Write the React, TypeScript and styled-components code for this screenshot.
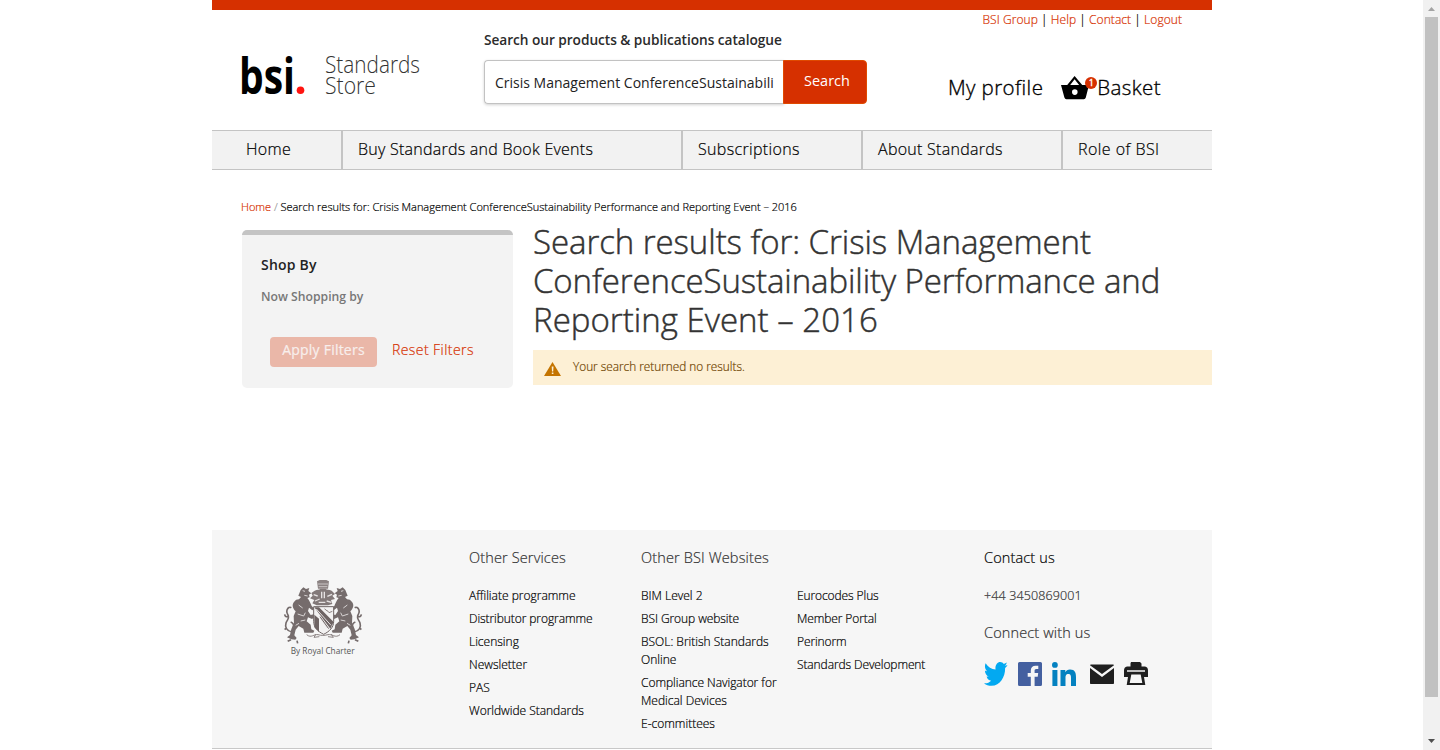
import React from "react";
import styled, { createGlobalStyle } from "styled-components";

const Global = createGlobalStyle`
  * { box-sizing: border-box; }
  html, body { margin: 0; padding: 0; background: #fff; }
  body { font-family: "Open Sans", "Noto Sans", sans-serif; font-weight: 300; -webkit-text-stroke-width: 0.2px; color: #000; overflow: hidden; }
  h1, h2, h3, p, ul { margin: 0; padding: 0; font-weight: inherit; }
  ul { list-style: none; }
  a { color: inherit; text-decoration: none; }
`;
const red = "#d63000";

const Viewport = styled.div`display: grid; grid-template-columns: 1423px 17px; height: 750px; overflow: hidden;`;
const Page = styled.div`width: 1000px; margin: 0 auto 0 212px; height: 750px; display: flex; flex-direction: column;`;
const Tracked = styled.span<{ $ls: number }>`letter-spacing: ${p => p.$ls}px;`;

const Header = styled.header`border-top: 10px solid ${red}; height: 130px; display: grid; grid-template-columns: 272px 383px 1fr; flex: none;`;
const Logo = styled.svg`display: block; width: 200px; height: 50px; margin: 40px 0 0 28px; overflow: visible;`;
const SearchForm = styled.form`padding-top: 20px; -webkit-text-stroke-width: 0;`;
const SearchLabel = styled.label`display: block; font-size: 13.7px; line-height: 19px; letter-spacing: -0.05px; font-weight: 600; color: #2b2b2b; white-space: nowrap;`;
const SearchRow = styled.div`display: flex; margin-top: 11px; height: 44px; width: 383px;`;
const SearchInput = styled.div`width: 300px; border: 1px solid #c2c2c2; border-right: 0; border-radius: 4px 0 0 4px; box-shadow: 0 1px 3px rgba(0,0,0,.18); padding: 0 10px; display: flex; align-items: center; font-size: 14px; font-weight: 400; color: #222; white-space: nowrap; overflow: hidden;`;
const SearchButton = styled.button`width: 84px; border: 1px solid #e04a00; border-radius: 0 4px 4px 0; background: ${red}; color: #fff; font: 500 14.5px/20px "Open Sans", sans-serif; padding: 0 0 2px 4px; margin-left: -1px; white-space: nowrap;`;
const HeaderRight = styled.div`display: flex; flex-direction: column; align-items: flex-end;`;
const TopLinks = styled.div`font-size: 12px; line-height: 18px; letter-spacing: 0.06px; margin: 1px 30px 0 0; white-space: nowrap; a { color: ${red}; }`;
const Account = styled.div`display: flex; align-items: center; margin: 42px 51px 0 0; height: 32px; font-size: 20.5px; letter-spacing: 0.4px; white-space: nowrap; -webkit-text-stroke-width: 0.35px;`;
const BasketIcon = styled.span`position: relative; width: 28px; height: 26px; margin: 1px 8px 0 18px; svg { display: block; }`;
const Badge = styled.span`position: absolute; left: 24px; top: 2px; width: 12px; height: 12px; border-radius: 50%; background: ${red}; color: #fff; font-size: 9px; font-weight: 400; letter-spacing: 0; line-height: 12px; text-align: center;`;

const Nav = styled.nav`display: flex; height: 40px; flex: none; background: #f2f2f2; border: solid #c4c4c4; border-width: 1px 0; font-size: 16px; line-height: 36px;`;
const NavItem = styled.a<{ $w: number; $first?: boolean }>`width: ${p => p.$w}px; padding-left: ${p => (p.$first ? 34 : 15)}px; border-left: ${p => (p.$first ? 0 : 2)}px solid #c4c4c4; white-space: nowrap;`;

const Crumbs = styled.div`margin: 29px 0 0 29px; height: 16px; flex: none; font-size: 11px; line-height: 16px; letter-spacing: -0.015px; white-space: nowrap; a { color: ${red}; } i { font-style: normal; color: #999; }`;
const Main = styled.main`display: grid; grid-template-columns: 271px 679px; gap: 20px; margin-left: 30px; height: 315px; padding-top: 7px; flex: none;`;
const Sidebar = styled.aside`margin-top: 8px; height: 158px; background: #f3f3f3; border-top: 5px solid #c4c4c4; border-radius: 5px; padding: 20px 19px 0; white-space: nowrap;`;
const ShopBy = styled.h2`font-size: 14px; line-height: 20px; letter-spacing: 0.2px; font-weight: 600; color: #222; -webkit-text-stroke-width: 0;`;
const NowShopping = styled.h3`font-size: 12.2px; line-height: 18px; margin-top: 13px; font-weight: 600; color: #777; -webkit-text-stroke-width: 0;`;
const FilterActions = styled.div`display: flex; margin: 31px 0 0 9px; font-size: 14px; line-height: 26px;`;
const Apply = styled.button`width: 107px; height: 30px; border: 0; border-radius: 4px; background: #eab7a8; color: #f8efed; padding: 0 0 4px; font: 500 14px/26px "Open Sans", sans-serif; letter-spacing: 0.22px; white-space: nowrap;`;
const Reset = styled.a`color: ${red}; margin-left: 15px; letter-spacing: 0.43px;`;
const Title = styled.h1`font-size: 33px; line-height: 39px; color: #333; white-space: nowrap; -webkit-text-stroke-width: 0.45px; span { display: block; }`;
const Notice = styled.div`height: 35px; margin-top: 11px; background: #fdf0d5; color: #6f4400; display: flex; align-items: center; font-size: 11.8px; padding-left: 11px; svg { margin: 2px 12px 0 0; } span { margin-bottom: 3px; }`;

const Footer = styled.footer`height: 219px; flex: none; background: #f6f6f6; border-bottom: 1px solid #c8c8c8; display: grid; grid-template-columns: 257px 172px 156px 187px 1fr; padding-top: 18px;`;
const Crest = styled.svg`display: block; width: 110px; height: 95px; margin: 22px 0 0 58px;`;
const FootTitle = styled.h3<{ $dark?: boolean }>`font-size: 14.5px; line-height: 20px; height: 20px; letter-spacing: 0.14px; margin-bottom: 19px; color: ${p => (p.$dark ? "#000" : "#333")}; white-space: nowrap;`;
const Links = styled.ul<{ $untitled?: boolean }>`font-size: 12px; line-height: 18px; white-space: nowrap; margin-top: ${p => (p.$untitled ? 39 : 0)}px; li { margin-bottom: 5px; letter-spacing: ${p => (p.$untitled ? -0.1 : 0)}px; } span { display: block; }`;
const Phone = styled.p`font-size: 12.5px; line-height: 18px; color: #333; letter-spacing: 0.13px; margin-bottom: 18px;`;
const Socials = styled.div`display: flex; gap: 10px; height: 24px; svg { display: block; } svg:nth-child(4) { margin-left: 4px; }`;

const Scrollbar = styled.div`background: #f1f1f1; display: flex; flex-direction: column; align-items: center; height: 750px;`;
const Arrow = styled.svg`width: 17px; height: 17px; flex: none;`;
const Thumb = styled.div`width: 13px; height: 680px; background: #c1c1c1; margin-bottom: 36px;`;

const Supporter = () => (
  <g>
    <path d="M92 60l8-8 8 5 10-3-3 9 9 7-7 4 2 8-7 2c6 7 9 15 13 24l8 8-6 5-10-8-3 10 8 12 12-3 4 6-12 9-12-5-4 12 12 10 2 14 9 4-3 6H103l-3-12-14-8-9 11-4 17 7 8-4 5-12-1-13-6 9-7 4-18 8-18-1-21 6-14c-9-9-12-20-5-28 4-6 9-8 15-8l6-7-8-4z" fill="#756c6c" />
    <path d="M66 186c-16-3-22-15-18-27 3-9 10-12 7-22-2-6-7-8-4-17 3-7 8-10 13-7M55 139c-6 3-10 1-11-6M62 156c8 3 11 9 8 18M50 173l-6 6M63 209l-10 5m28-2 2 8" fill="none" stroke="#756c6c" strokeWidth="5" />
    <path d="M98 62l7 2m-2 12 10 2m-27 27 12 9m-15 18 18 6 5-10m-14 25 14-3m-29 16 10-6" fill="none" stroke="#d8d4d4" strokeWidth="3" />
  </g>
);

export default function App() {
  return (
    <Viewport>
      <Global />
      <Page>
        <Header>
          <Logo viewBox="240 50 200 50">
            <text x="239" y="94" fontSize="50" fontWeight="700" textLength="56" lengthAdjust="spacingAndGlyphs">bsi</text>
            <circle cx="300.5" cy="90.3" r="3.8" fill="#ff1410" />
            <text x="325" y="73" fontSize="23.5" fill="#333" textLength="95" lengthAdjust="spacingAndGlyphs">Standards</text>
            <text x="325" y="94" fontSize="23.5" fill="#333" textLength="51" lengthAdjust="spacingAndGlyphs">Store</text>
          </Logo>
          <SearchForm>
            <SearchLabel>Search our products &amp; publications catalogue</SearchLabel>
            <SearchRow>
              <SearchInput>Crisis Management ConferenceSustainabili</SearchInput>
              <SearchButton type="button">Search</SearchButton>
            </SearchRow>
          </SearchForm>
          <HeaderRight>
            <TopLinks><a>BSI Group</a> | <a>Help</a> | <a>Contact</a> | <a>Logout</a></TopLinks>
            <Account>
              <span>My profile</span>
              <BasketIcon>
                <svg width="28" height="26" viewBox="0 0 28 26"><path fillRule="evenodd" d="M0 10h6.2L13.6 1l7.6 9H28l-3.200 12.500q-.5 1.800-2 1.800H5.400q-1.500 0-2-1.800zM9.200 10h8.900l-4.500-5.700zM13.800 14.300a2.800 2.800 0 1 0 0 5.600a2.800 2.800 0 1 0 0-5.600z" /></svg>
                <Badge>1</Badge>
              </BasketIcon>
              <span>Basket</span>
            </Account>
          </HeaderRight>
        </Header>
        <Nav>
          <NavItem $w={129} $first><Tracked $ls={0.3}>Home</Tracked></NavItem>
          <NavItem $w={340}><Tracked $ls={0.25}>Buy Standards and Book Events</Tracked></NavItem>
          <NavItem $w={180}><Tracked $ls={0.34}>Subscriptions</Tracked></NavItem>
          <NavItem $w={200}><Tracked $ls={0.27}>About Standards</Tracked></NavItem>
          <NavItem $w={151}><Tracked $ls={0.45}>Role of BSI</Tracked></NavItem>
        </Nav>
        <Crumbs><a>Home</a> <i>/</i> <span>Search results for: Crisis Management ConferenceSustainability Performance and Reporting Event – 2016</span></Crumbs>
        <Main>
          <Sidebar>
            <ShopBy>Shop By</ShopBy>
            <NowShopping>Now Shopping by</NowShopping>
            <FilterActions>
              <Apply>Apply Filters</Apply>
              <Reset>Reset Filters</Reset>
            </FilterActions>
          </Sidebar>
          <div>
            <Title>
              <Tracked $ls={-0.07}>Search results for: Crisis Management</Tracked>
              <Tracked $ls={-0.11}>ConferenceSustainability Performance and</Tracked>
              <Tracked $ls={0.02}>Reporting Event – 2016</Tracked>
            </Title>
            <Notice>
              <svg width="17" height="14" viewBox="0 0 17 14"><path d="M8.500 0L17 14H0z" fill="#c47400" /><path d="M7.700 4.500h1.800l-.3 5H8zM7.800 10.500h1.600V12H7.800z" fill="#fdf0d5" /></svg>
              <span>Your search returned no results.</span>
            </Notice>
          </div>
        </Main>
        <Footer>
          <Crest viewBox="0 0 330 285">
            <Supporter />
            <g transform="translate(318 0) scale(-1 1)"><Supporter /></g>
            <path d="M141 34l8-4h20l8 4-3 22h-30z" fill="#8b8282" />
            <path d="M144 42h30M146 50h26" stroke="#c9c4c4" strokeWidth="3" />
            <path d="M134 62c8-5 14-2 17-6h16c3 4 10 1 18 6l10 10-8 5 8 10-12 3 4 12-13 4H140l-13-6 6-10-13-5 8-8-4-8z" fill="#827979" />
            <path d="M131 74l12 4m-8 15 14-6m6-22v20m8-20v20m9-6 14-6m-16 20 14 4m-38 0h20" stroke="#e6e3e3" strokeWidth="4" />
            <path d="M131 110h60v44c0 18-12 30-30 39-18-9-30-21-30-39z" fill="#f3f2f2" stroke="#6e6464" strokeWidth="3" />
            <path d="M133 112h14l44 44-10 20zM133 134l14 12v40l-14-14z" fill="#6e6464" />
            <path d="M139 117l44 49M152 146l20 28" stroke="#e6e3e3" strokeWidth="3" />
            <path d="M150 140l26 36" stroke="#6e6464" strokeWidth="3" />
            <path d="M164 116c4 8 10 4 13 12l10-4M110 194c14 12 22-3 34 0 10 3 18 3 30 0 12-3 22 12 36 0M138 192l-6 10 16-2m36-8 6 10-16-2" fill="none" stroke="#8b8282" strokeWidth="3" />
            <text x="62" y="252" fontSize="25" fontWeight="400" fill="#555" textLength="192" lengthAdjust="spacingAndGlyphs">By Royal Charter</text>
          </Crest>
          <div>
            <FootTitle>Other Services</FootTitle>
            <Links>
              <li><a>Affiliate programme</a></li>
              <li><Tracked as="a" $ls={-0.08}>Distributor programme</Tracked></li>
              <li><a>Licensing</a></li>
              <li><a>Newsletter</a></li>
              <li><a>PAS</a></li>
              <li><Tracked as="a" $ls={-0.03}>Worldwide Standards</Tracked></li>
            </Links>
          </div>
          <div>
            <FootTitle>Other BSI Websites</FootTitle>
            <Links>
              <li><a>BIM Level 2</a></li>
              <li><Tracked as="a" $ls={-0.08}>BSI Group website</Tracked></li>
              <li><span>BSOL: British Standards</span><span>Online</span></li>
              <li><Tracked $ls={-0.04}>Compliance Navigator for</Tracked><span>Medical Devices</span></li>
              <li><a>E-committees</a></li>
            </Links>
          </div>
          <Links $untitled>
            <li><a>Eurocodes Plus</a></li>
            <li><a>Member Portal</a></li>
            <li><a>Perinorm</a></li>
            <li><a>Standards Development</a></li>
          </Links>
          <div>
            <FootTitle $dark>Contact us</FootTitle>
            <Phone>+44 3450869001</Phone>
            <FootTitle>Connect with us</FootTitle>
            <Socials>
              <svg width="24" height="24" viewBox="0 2.2 24.500 19.700" preserveAspectRatio="none"><path fill="#03a9f1" d="M23.954 4.569c-.885.389-1.83.654-2.825.775 1.014-.611 1.794-1.574 2.163-2.723-.951.555-2.005.959-3.127 1.184-.896-.959-2.173-1.559-3.591-1.559-2.717 0-4.92 2.203-4.92 4.917 0 .39.045.765.127 1.124C7.691 8.094 4.066 6.13 1.64 3.161c-.427.722-.666 1.561-.666 2.475 0 1.71.87 3.213 2.188 4.096-.807-.026-1.566-.248-2.228-.616v.061c0 2.385 1.693 4.374 3.946 4.827-.413.111-.849.171-1.296.171-.314 0-.615-.03-.916-.086.631 1.953 2.445 3.377 4.604 3.417-1.68 1.319-3.809 2.105-6.102 2.105-.39 0-.779-.023-1.17-.067 2.189 1.394 4.768 2.209 7.557 2.209 9.054 0 13.999-7.496 13.999-13.986 0-.209 0-.42-.015-.63.961-.689 1.8-1.56 2.46-2.548l-.047-.02z" /></svg>
              <svg width="24" height="24" viewBox="0 0 24 24"><path fill="#4460a0" d="M1.500 0h21A1.500 1.500 0 0 1 24 1.500v21a1.500 1.500 0 0 1-1.500 1.500H16.600v-9.300h3.100l.5-3.600h-3.600V8.800c0-1 .3-1.800 1.800-1.800h1.900V3.800c-.3 0-1.500-.1-2.800-.1-2.800 0-4.700 1.700-4.700 4.800v2.600H9.700v3.600h3.100V24H1.500A1.500 1.500 0 0 1 0 22.500v-21A1.500 1.500 0 0 1 1.500 0z" /></svg>
              <svg width="24" height="24" viewBox="0 0 24 24"><path fill="#0481c0" d="M.4 8h5v16h-5zM2.900 0a2.900 2.900 0 1 1 0 5.800a2.900 2.900 0 0 1 0-5.800zM8.500 8h4.800v2.200c.7-1.300 2.300-2.600 4.700-2.600 5 0 6 3.300 6 7.600V24h-5v-7.800c0-1.900 0-4.300-2.600-4.300s-2.900 2-2.900 4.100v8h-5z" /></svg>
              <svg width="24" height="24" viewBox="0 0 24 24"><path fill="#1f1f1f" d="M1 2.600h22c.6 0 1 .3 1 .6L12 12 0 3.200c0-.3.4-.6 1-.6zM0 6l12 9 12-9v15c0 .6-.4 1-1 1H1c-.6 0-1-.4-1-1z" /></svg>
              <svg width="24" height="24" viewBox="0 0 24 24"><path fill="#1f1f1f" fillRule="evenodd" d="M7 0h9l1.500 1.500V4.500h3.500c2 .3 3 2 3 4v6.500h-4l1.300 8H2.700L4 15H0V8.500c0-2 1-3.700 3-4h3.500V1.500zM3 8.300v1.400h18V8.300zM7.300 12.500L5.700 21h12.600l-1.600-8.500z" /></svg>
            </Socials>
          </div>
        </Footer>
      </Page>
      <Scrollbar>
        <Arrow viewBox="0 0 17 17"><path d="M5 11h7L8.500 7z" fill="#a3a3a3" /></Arrow>
        <Thumb />
        <Arrow viewBox="0 0 17 17"><path d="M5 6h7l-3.500 4z" fill="#505050" /></Arrow>
      </Scrollbar>
    </Viewport>
  );
}
